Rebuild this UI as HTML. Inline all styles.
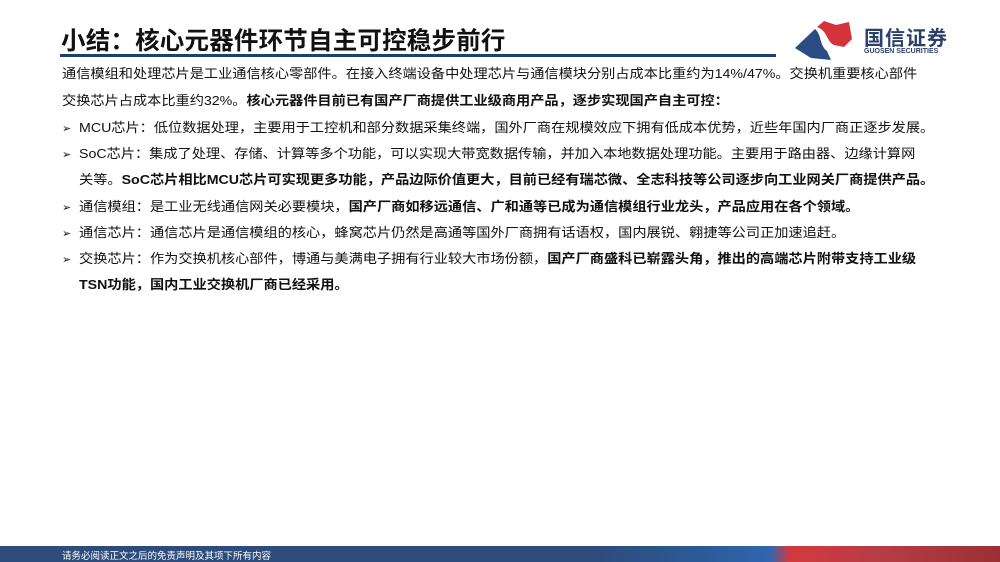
<!DOCTYPE html>
<html><head><meta charset="utf-8"><style>
body{margin:0;width:1000px;height:562px;position:relative;background:#fff;overflow:hidden;font-family:"Liberation Sans","Noto Sans CJK SC",sans-serif;color:#111}
.t{position:absolute;left:61px;top:22px;font-size:24.5px;font-weight:bold;letter-spacing:0.2px;color:#111}
.line{position:absolute;left:60px;top:54px;width:716px;height:3px;background:#1f3f73}
.p{position:absolute;left:62px;font-size:14.2px;white-space:nowrap;line-height:16px;transform:scaleY(0.92);transform-origin:top}
.b{font-weight:bold}
.ar{position:absolute;left:62px;font-size:11px}
.foot{position:absolute;left:0;top:546px;width:1000px;height:16px;background:linear-gradient(90deg,#2d4c7c 0%,#2d4c7c 60%,#2c5a98 70%,#3066b0 77%,#d33a3e 79%,#b73c45 88%,#9b2f35 100%)}
.foot span{position:absolute;left:62px;top:2px;font-size:9.5px;color:#fff}
</style></head><body>
<div class="t">小结：核心元器件环节自主可控稳步前行</div>
<div class="line"></div>
<svg style="position:absolute;left:795px;top:20px" width="62" height="42" viewBox="0 0 62 42">
<path d="M0 28 L20 9 C27 15 24 25 32 31 L36 40 L16 38 Z" fill="#2a4d86"/>
<path d="M22 7 L29 1 L41 5 L54 2 L57 19 L49 27 L39 25 C31 21 33 11 22 7Z" fill="#d6323a"/>
</svg>
<div style="position:absolute;left:864px;top:22px;font-size:20px;font-weight:bold;color:#2a3f6a;letter-spacing:1px">国信证券</div>
<div style="position:absolute;left:864px;top:48px;font-size:7px;font-weight:bold;color:#2a3f6a">GUOSEN SECURITIES</div>

<div class="p" style="top:67px">通信模组和处理芯片是工业通信核心零部件。在接入终端设备中处理芯片与通信模块分别占成本比重约为14%/47%。交换机重要核心部件</div>
<div class="p" style="top:94px">交换芯片占成本比重约32%。<span class="b">核心元器件目前已有国产厂商提供工业级商用产品，逐步实现国产自主可控：</span></div>
<div class="ar" style="top:122px">➢</div><div class="p" style="left:79px;top:121px">MCU芯片：低位数据处理，主要用于工控机和部分数据采集终端，国外厂商在规模效应下拥有低成本优势，近些年国内厂商正逐步发展。</div>
<div class="ar" style="top:148px">➢</div><div class="p" style="left:79px;top:147px">SoC芯片：集成了处理、存储、计算等多个功能，可以实现大带宽数据传输，并加入本地数据处理功能。主要用于路由器、边缘计算网</div>
<div class="p" style="left:79px;top:173px">关等。<span class="b">SoC芯片相比MCU芯片可实现更多功能，产品边际价值更大，目前已经有瑞芯微、全志科技等公司逐步向工业网关厂商提供产品。</span></div>
<div class="ar" style="top:201px">➢</div><div class="p" style="left:79px;top:200px">通信模组：是工业无线通信网关必要模块，<span class="b">国产厂商如移远通信、广和通等已成为通信模组行业龙头，产品应用在各个领域。</span></div>
<div class="ar" style="top:227px">➢</div><div class="p" style="left:79px;top:226px">通信芯片：通信芯片是通信模组的核心，蜂窝芯片仍然是高通等国外厂商拥有话语权，国内展锐、翱捷等公司正加速追赶。</div>
<div class="ar" style="top:253px">➢</div><div class="p" style="left:79px;top:252px">交换芯片：作为交换机核心部件，博通与美满电子拥有行业较大市场份额，<span class="b">国产厂商盛科已崭露头角，推出的高端芯片附带支持工业级</span></div>
<div class="p b" style="left:79px;top:278px">TSN功能，国内工业交换机厂商已经采用。</div>
<div class="foot"><span>请务必阅读正文之后的免责声明及其项下所有内容</span></div>
</body></html>
